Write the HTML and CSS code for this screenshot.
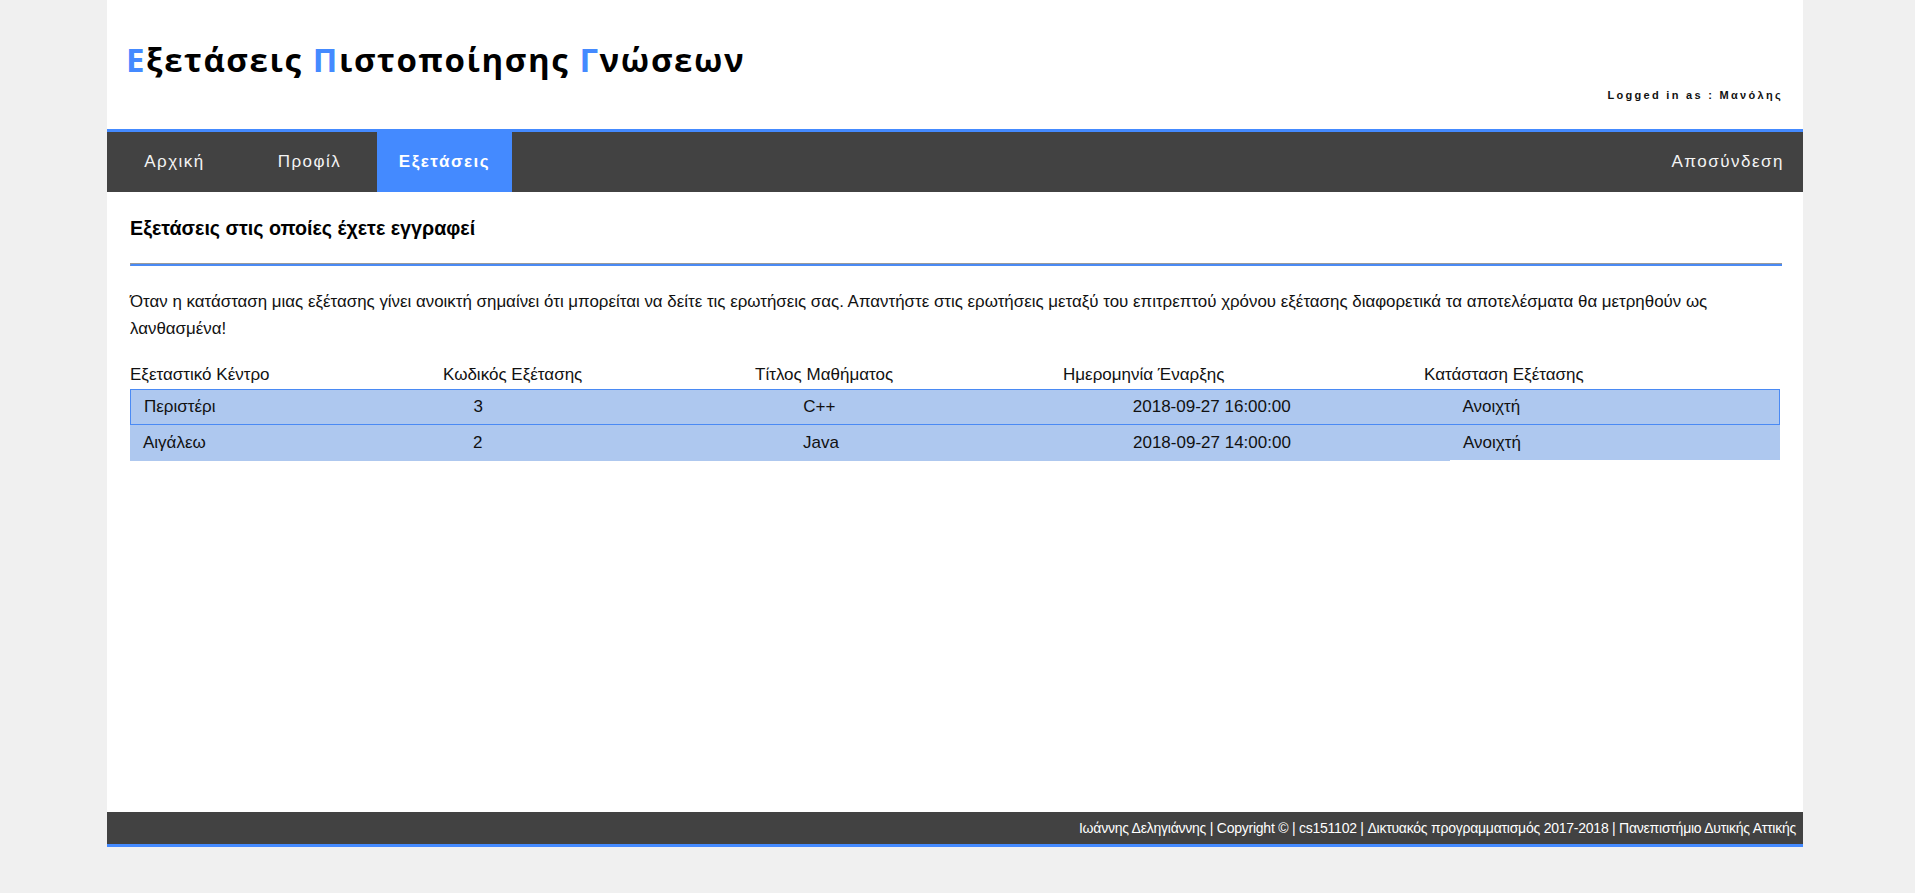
FILE: index.html
```html
<!DOCTYPE html>
<html lang="el">
<head>
<meta charset="utf-8">
<title>Εξετάσεις Πιστοποίησης Γνώσεων</title>
<link rel="stylesheet" href="styles.css">
</head>
<body>
<div class="page">
  <header class="header">
    <h1 class="title"><span class="cap">Ε</span>ξετάσεις <span class="cap">Π</span>ιστοποίησης <span class="cap">Γ</span>νώσεων</h1>
    <div class="user">Logged in as : Μανόλης</div>
  </header>
  <nav class="nav">
    <div class="nav-left">
      <a class="nav-item">Αρχική</a>
      <a class="nav-item">Προφίλ</a>
      <a class="nav-item active">Εξετάσεις</a>
    </div>
    <a class="nav-logout">Αποσύνδεση</a>
  </nav>
  <main class="content">
    <h3 class="heading">Εξετάσεις στις οποίες έχετε εγγραφεί</h3>
    <hr class="rule">
    <p class="info">Όταν η κατάσταση μιας εξέτασης γίνει ανοικτή σημαίνει ότι μπορείται να δείτε τις ερωτήσεις σας. Απαντήστε στις ερωτήσεις μεταξύ του επιτρεπτού χρόνου εξέτασης διαφορετικά τα αποτελέσματα θα μετρηθούν ως λανθασμένα!</p>
    <div class="thead">
      <div>Εξεταστικό Κέντρο</div>
      <div>Κωδικός Εξέτασης</div>
      <div>Τίτλος Μαθήματος</div>
      <div>Ημερομηνία Έναρξης</div>
      <div>Κατάσταση Εξέτασης</div>
    </div>
    <div class="row hover">
      <div class="cell">Περιστέρι</div>
      <div class="cell">3</div>
      <div class="cell">C++</div>
      <div class="cell">2018-09-27 16:00:00</div>
      <div class="cell">Ανοιχτή</div>
    </div>
    <div class="row">
      <div class="cell">Αιγάλεω</div>
      <div class="cell">2</div>
      <div class="cell">Java</div>
      <div class="cell">2018-09-27 14:00:00</div>
      <div class="cell short">Ανοιχτή</div>
    </div>
  </main>
  <footer class="footer">Ιωάννης Δεληγιάννης | Copyright © | cs151102 | Δικτυακός προγραμματισμός 2017-2018 | Πανεπιστήμιο Δυτικής Αττικής</footer>
</div>
</body>
</html>
```

FILE: styles.css
```css
html, body {
  margin: 0;
  padding: 0;
}
body {
  background: #f0f0f0;
  font-family: "Liberation Sans", Arial, sans-serif;
  color: #111;
}
.page {
  width: 1696px;
  margin-left: 107px;
  background: #fff;
}
.header {
  padding: 40px 20px 27px 19px;
}
.title {
  margin: 0;
  font-family: "Open Sans", "Liberation Sans", sans-serif;
  font-weight: 700;
  font-size: 33px;
  line-height: 40px;
  letter-spacing: 1.6px;
  color: #000;
}
.cap {
  color: #448aff;
}
.user {
  margin-top: 8px;
  text-align: right;
  font-size: 11px;
  line-height: 14px;
  font-weight: bold;
  letter-spacing: 2.3px;
  color: #111;
}
.nav {
  display: flex;
  justify-content: space-between;
  height: 60px;
  background: #424242;
  border-top: 3px solid #448aff;
}
.nav-left {
  display: flex;
}
.nav-item, .nav-logout {
  display: flex;
  align-items: center;
  justify-content: center;
  color: #f4f4f4;
  font-size: 17px;
  letter-spacing: 1.5px;
}
.nav-item {
  width: 135px;
}
.nav-item.active {
  background: #448aff;
  font-weight: bold;
  color: #fff;
}
.nav-logout {
  padding-right: 19px;
}
.content {
  height: 620px;
  padding: 25px 21px 0 23px;
  box-sizing: border-box;
}
.heading {
  margin: 0;
  font-size: 19.7px;
  line-height: 22px;
  font-weight: bold;
  color: #000;
}
.rule {
  margin: 24px 0 0 0;
  height: 0;
  border: 0;
  border-top: 1px solid #9a9a9a;
  border-left: 1px solid #9a9a9a;
  border-bottom: 2px solid #4a8af4;
}
.info {
  margin: 22px 0 0 0;
  font-size: 16.9px;
  line-height: 27px;
}
.thead {
  display: grid;
  grid-template-columns: 313px 312px 308px 361px 1fr;
  margin-top: 23px;
  font-size: 17px;
  line-height: 20px;
  padding-bottom: 4px;
  width: 1650px;
}
.row {
  display: grid;
  grid-template-columns: repeat(5, 1fr);
  width: 1650px;
  height: 36px;
  box-sizing: border-box;
  font-size: 17px;
  align-items: start;
}
.row.hover {
  border: 1px solid #4a8af4;
  background: #aec8ef;
}
.cell {
  height: 36px;
  line-height: 36px;
  padding-left: 13px;
  background: #aec8ef;
  box-sizing: border-box;
}
.row.hover .cell {
  height: 34px;
  line-height: 34px;
}
.cell.short {
  height: 35px;
}
.footer {
  height: 32px;
  line-height: 32px;
  background: #424242;
  border-bottom: 3px solid #448aff;
  color: #fff;
  font-size: 14px;
  letter-spacing: -0.24px;
  text-align: right;
  padding-right: 7px;
  white-space: nowrap;
}
```
